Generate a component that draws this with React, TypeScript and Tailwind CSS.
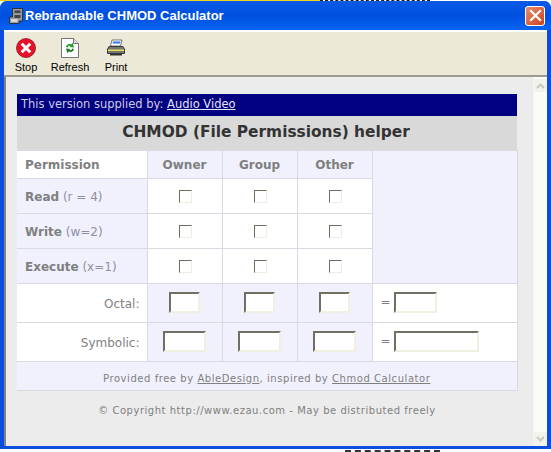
import React from 'react';

const verdana = { fontFamily: '"DejaVu Sans", Verdana, sans-serif' };

const StopIcon = () => (
  <svg width="20" height="20" viewBox="0 0 20 20">
    <circle cx="10" cy="10" r="9.5" fill="#e8112a" stroke="#8a1a20" strokeWidth="0.8" />
    <path d="M6.8 6.8l6.4 6.4M13.2 6.8l-6.4 6.4" stroke="#fff" strokeWidth="3" strokeLinecap="square" />
  </svg>
);

const RefreshIcon = () => (
  <svg width="18" height="20" viewBox="0 0 18 20">
    <path d="M0.5 0.5H12.5L17.5 5.5V19.5H0.5Z" fill="#fff" stroke="#555" strokeWidth="0.8" />
    <path d="M12.5 0.5V5.5H17.5" fill="#ddd" stroke="#555" strokeWidth="0.8" />
    <path d="M5 9C5.5 6.5 8 5.5 10.5 6.5L11.5 4.5L13 9.5L8.5 9L9.5 8C8 7.5 7 8 6.8 9.5Z" fill="#1c9a26" />
    <path d="M13 11C12.5 13.5 10 14.5 7.5 13.5L6.5 15.5L5 10.5L9.5 11L8.5 12C10 12.5 11 12 11.2 10.5Z" fill="#1c7a26" />
  </svg>
);

const PrintIcon = () => (
  <svg width="18" height="18" viewBox="0 0 18 18">
    <path d="M5 1H15L13.5 7H3.5Z" fill="#fff" stroke="#445" strokeWidth="0.7" />
    <path d="M6 2.5H13.5L13 4.5H5.5Z" fill="#2e7be0" />
    <path d="M2 7.5H16L17.5 10V14.5H0.5V10Z" fill="#77776f" stroke="#222" strokeWidth="0.8" />
    <path d="M1 10.5H17V12H1Z" fill="#e5dc60" />
    <path d="M3 14.5H15V16.5H3Z" fill="#333" />
  </svg>
);

const CabinetIcon = () => (
  <svg width="14" height="16" viewBox="0 0 14 16">
    <path d="M3.5 0.5H13.5V13H10V15.5H0.5V9H3.5Z" fill="#9a9a9a" stroke="#222" strokeWidth="0.8" />
    <path d="M5.5 2.5H11.5V5H5.5ZM5.5 7H11.5V10H5.5Z" fill="#444" />
    <path d="M2 11H8.5V14H2Z" fill="#d6d6d6" />
  </svg>
);

const Check = () => (
  <span className="inline-block ml-[2px] w-[13px] h-[13px] bg-white border border-[#efeee2] border-t-[#6f6e5e] border-l-[#6f6e5e] align-middle" />
);

const Field = ({ w }: { w: string }) => (
  <span className={`inline-block ${w} h-[21px] bg-white border-2 border-[#f1efe2] border-t-[#716f64] border-l-[#716f64] align-middle`} />
);

const Toolbtn = ({ label, w, children }: { label: string; w: string; children: React.ReactNode }) => (
  <div className={`flex flex-col items-center ${w}`}>
    <div className="h-[20px] flex items-center justify-center">{children}</div>
    <span className="text-[11px] leading-[13px] mt-[3px] text-black">{label}</span>
  </div>
);

const cell = 'border border-[#d9d9e3]';
const tint = 'bg-[#f1f1fd]';

export default function App() {
  const perms = [
    ['Read', '(r = 4)'],
    ['Write', '(w=2)'],
    ['Execute', '(x=1)'],
  ];

  return (
    <div
      className="w-[551px] h-[452px] overflow-hidden bg-white flex flex-col"
      style={{ fontFamily: '"Liberation Sans", Arial, sans-serif' }}
    >
      {/* what shows of the page behind the window */}
      <div className="h-[1px] flex shrink-0">
        <div className="w-[320px] bg-[#f2d21a]" />
        <div className="w-[110px] border-t border-dashed border-[#222]" />
      </div>

      <div className="h-[448px] shrink-0 flex flex-col rounded-t-[7px] overflow-hidden bg-[#0a4de0] px-[4px] pb-[3px]">
        {/* title bar */}
        <div className="h-[29px] -mx-[4px] px-[9px] flex items-center justify-between bg-gradient-to-b from-[#0a5ae6] via-[#0050e0] to-[#0a63f0]">
          <div className="flex items-center gap-[2px]">
            <CabinetIcon />
            <span className="text-white font-bold text-[13px]">Rebrandable CHMOD Calculator</span>
          </div>
          <div className="w-[20px] h-[20px] mr-[-3px] rounded-[3px] border border-white bg-gradient-to-br from-[#e88a6c] to-[#cc3f1c] flex items-center justify-center">
            <svg width="13" height="13" viewBox="0 0 13 13">
              <path d="M2 2l9 9M11 2l-9 9" stroke="#fff" strokeWidth="2.2" strokeLinecap="square" />
            </svg>
          </div>
        </div>

        {/* toolbar */}
        <div className="h-[47px] bg-[#ece9d8] border-t-2 border-t-white border-b-2 border-b-[#9d9b8e] flex items-start pt-[6px] pl-[7px]">
          <Toolbtn label="Stop" w="w-[30px]"><StopIcon /></Toolbtn>
          <div className="ml-[8px]">
            <Toolbtn label="Refresh" w="w-[42px]"><RefreshIcon /></Toolbtn>
          </div>
          <div className="ml-[6px]">
            <Toolbtn label="Print" w="w-[38px]"><PrintIcon /></Toolbtn>
          </div>
        </div>

        <div className="flex-1 flex min-h-0 border-l-2 border-l-[#85837a]">
          {/* page */}
          <div className="w-[527px] bg-[#ececec] pt-[17px] pl-[11px] text-[#7f7f7f]" style={verdana}>
            <table className="w-[500px] table-fixed border-collapse text-[12px]">
              <colgroup>
                <col className="w-[130px]" />
                <col className="w-[75px]" />
                <col className="w-[75px]" />
                <col className="w-[75px]" />
                <col className="w-[145px]" />
              </colgroup>
              <tbody>
                <tr className="h-[22px] bg-[#000080] text-[#cdcde8] text-[11.5px]">
                  <td colSpan={5} className="pl-[4px]">
                    This version supplied by: <span className="underline text-[#e4e4f4]">Audio Video</span>
                  </td>
                </tr>
                <tr className="h-[34px] bg-[#d9d9d9]">
                  <td colSpan={5} className="text-center font-bold text-[15.4px] text-[#333] pr-[2px]">
                    CHMOD (File Permissions) helper
                  </td>
                </tr>
                <tr className="h-[28px] font-bold">
                  <td className={`${cell} border-l-0 bg-white pl-[8px] pt-[2px]`}>Permission</td>
                  <td className={`${cell} ${tint} text-center pt-[2px]`}>Owner</td>
                  <td className={`${cell} ${tint} text-center pt-[2px]`}>Group</td>
                  <td className={`${cell} ${tint} text-center pt-[2px]`}>Other</td>
                  <td rowSpan={4} className={`${cell} ${tint}`} />
                </tr>
                {perms.map(([name, hint]) => (
                  <tr key={name} className="h-[35px]">
                    <td className={`${cell} border-l-0 ${tint} pl-[8px] pt-[2px]`}>
                      <b>{name}</b> <span className="text-[#8f8f9f]">{hint}</span>
                    </td>
                    <td className={`${cell} bg-white text-center`}><Check /></td>
                    <td className={`${cell} bg-white text-center`}><Check /></td>
                    <td className={`${cell} bg-white text-center`}><Check /></td>
                  </tr>
                ))}
                <tr className="h-[39px]">
                  <td className={`${cell} border-l-0 bg-white text-right pr-[7px] pt-[2px]`}>Octal:</td>
                  <td className={`${cell} ${tint} text-center`}><Field w="w-[31px]" /></td>
                  <td className={`${cell} ${tint} text-center`}><Field w="w-[31px]" /></td>
                  <td className={`${cell} ${tint} text-center`}><Field w="w-[31px]" /></td>
                  <td className={`${cell} bg-white pl-[8px]`}>
                    = <Field w="w-[43px]" />
                  </td>
                </tr>
                <tr className="h-[39px]">
                  <td className={`${cell} border-l-0 bg-white text-right pr-[7px] pt-[2px]`}>Symbolic:</td>
                  <td className={`${cell} ${tint} text-center`}><Field w="w-[43px]" /></td>
                  <td className={`${cell} ${tint} text-center`}><Field w="w-[43px]" /></td>
                  <td className={`${cell} ${tint} text-center`}><Field w="w-[43px]" /></td>
                  <td className={`${cell} bg-white pl-[8px]`}>
                    = <Field w="w-[85px]" />
                  </td>
                </tr>
                <tr className="h-[29px]">
                  <td colSpan={5} className={`${cell} border-l-0 ${tint} text-center text-[10px] tracking-[0.55px] pt-[5px]`}>
                    Provided free by <span className="underline">AbleDesign</span>, inspired by{' '}
                    <span className="underline">Chmod Calculator</span>
                  </td>
                </tr>
              </tbody>
            </table>
            <p className="w-[500px] mt-[12px] text-center text-[10px] tracking-[0.53px]">
              © Copyright http://www.ezau.com - May be distributed freely
            </p>
          </div>

          {/* scrollbar */}
          <div className="flex-1 bg-[#fbfbf8] flex flex-col justify-between border-l border-l-[#f4f4f0]">
            <div className="h-[13px] mt-[2px] bg-[#f3f2ec] flex items-center justify-center">
              <svg width="9" height="6" viewBox="0 0 9 6"><path d="M1 5l3.5-3.5L8 5" fill="none" stroke="#c9c8c0" strokeWidth="2" /></svg>
            </div>
            <div className="h-[14px] bg-[#f3f2ec] flex items-center justify-center">
              <svg width="9" height="6" viewBox="0 0 9 6"><path d="M1 1l3.5 3.5L8 1" fill="none" stroke="#c9c8c0" strokeWidth="2" /></svg>
            </div>
          </div>
        </div>
      </div>

      <div className="h-[3px] flex shrink-0">
        <div className="ml-[345px] w-[95px] h-[2px] mt-[1px] border-t-2 border-dashed border-[#333]" />
      </div>
    </div>
  );
}
